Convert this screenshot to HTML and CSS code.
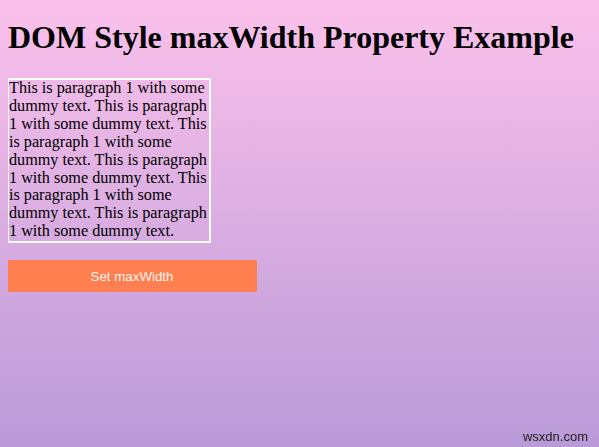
FILE: index.html
```html
<!DOCTYPE html>
<html>
<head>
<meta charset="utf-8">
<link rel="stylesheet" href="styles.css">
</head>
<body>
<h1 class="title">DOM Style maxWidth Property Example</h1>
<p class="para">This is paragraph 1 with some dummy text. This is paragraph 1 with some dummy text. This is paragraph 1 with some dummy text. This is paragraph 1 with some dummy text. This is paragraph 1 with some dummy text. This is paragraph 1 with some dummy text.</p>
<button class="btn">Set maxWidth</button>
<div class="watermark">wsxdn.com</div>
</body>
</html>
```
FILE: styles.css
```css
html {
  height: 100%;
  background: linear-gradient(to bottom, #fbc1eb 0%, #b99ad8 100%);
}
body {
  margin: 8px;
  font-family: "Liberation Serif", "Times New Roman", serif;
  color: #000;
}
.title {
  font-size: 32px;
  font-weight: bold;
  margin: 11px 0 22px 0;
  line-height: 37px;
}
.para {
  width: 200px;
  margin: 0 0 17px -1px;
  border: 2px solid #fff;
  font-size: 16.2px;
  line-height: 17.9px;
  padding: 0;
}
.btn {
  display: block;
  margin-left: -1px;
  width: 250px;
  height: 32px;
  background: #ff7f50;
  color: #fff4ee;
  border: none;
  border-radius: 2px;
  font-family: "Liberation Sans", Arial, sans-serif;
  font-size: 13.3px;
}
.watermark {
  position: fixed;
  right: 11px;
  bottom: 3px;
  font-family: "Liberation Sans", Arial, sans-serif;
  font-size: 13px;
  color: #222;
}
```
